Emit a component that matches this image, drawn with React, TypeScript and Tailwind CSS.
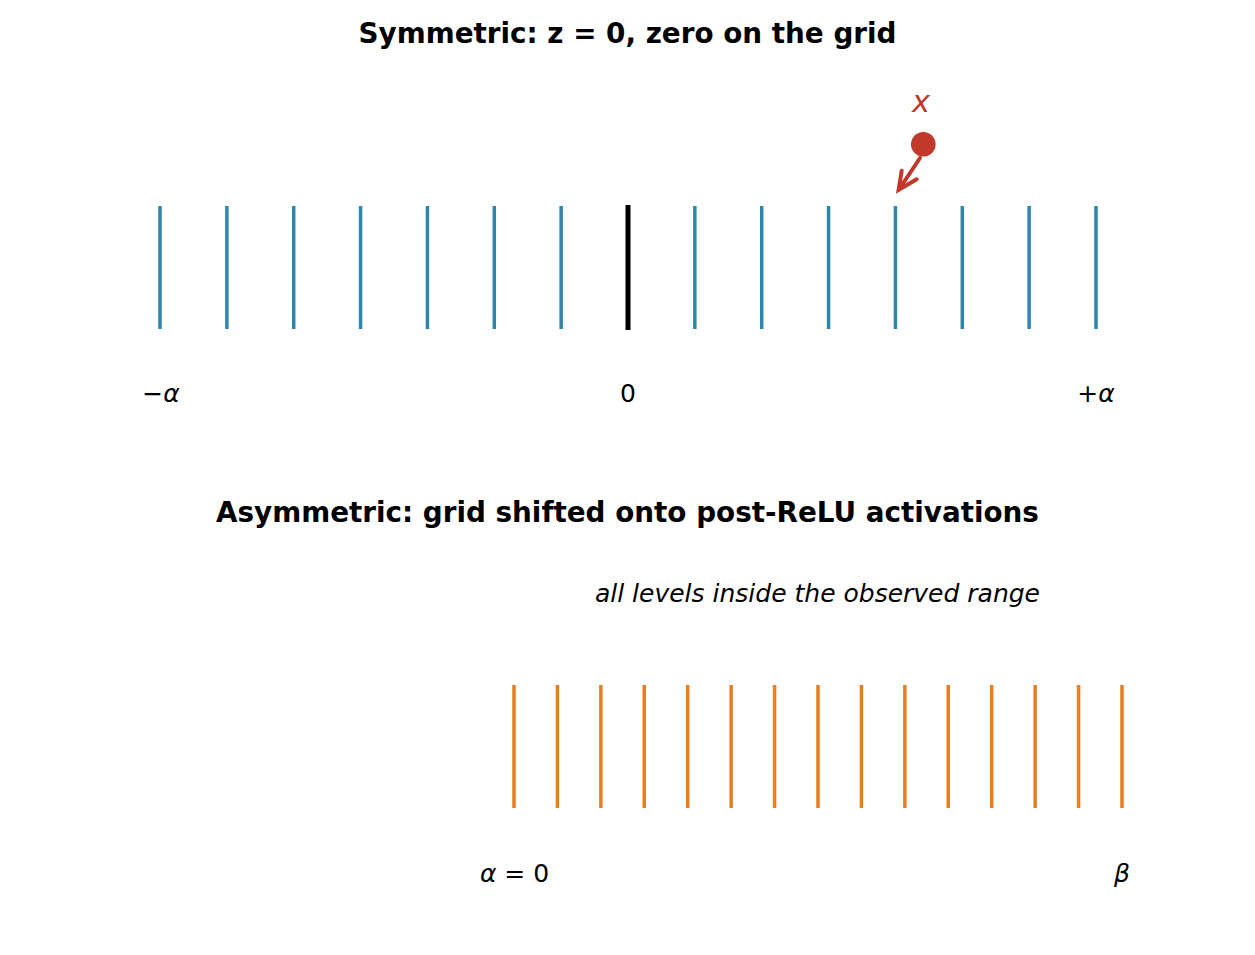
const FONT = '"DejaVu Sans", "Liberation Sans", sans-serif';

const BLUE = '#2e86ab';
const ORANGE = '#e67e22';
const RED = '#c0392b';

// symmetric grid: 15 levels from -alpha to +alpha
const symLevels = Array.from({ length: 15 }, (_, i) => 160 + (i * 936) / 14);
// asymmetric grid: 15 levels from alpha=0 to beta
const asymLevels = Array.from({ length: 15 }, (_, i) => 514 + (i * 608) / 14);

function SymmetricPanel() {
  // svg starts at page y = 66
  return (
    <div className="flex flex-col">
      <div className="h-[66px] pt-[2px] flex items-center justify-center">
        <h2 className="text-[27.8px] font-bold text-black leading-none" style={{ fontFamily: FONT }}>
          Symmetric: z = 0, zero on the grid
        </h2>
      </div>
      <svg width={1255} height={412} viewBox="0 66 1255 412" className="block">
        {symLevels.map((x, i) =>
          i === 7 ? (
            <line key={i} x1={x} x2={x} y1={205} y2={330} stroke="#000" strokeWidth={5} />
          ) : (
            <line key={i} x1={x} x2={x} y1={206} y2={329} stroke={BLUE} strokeWidth={3.5} />
          )
        )}

        {/* the value x and where it rounds to */}
        <text x={921} y={111.5} textAnchor="middle" fill={RED} fontSize={30.5} fontStyle="italic" fontFamily={FONT}>
          x
        </text>
        <circle cx={923.3} cy={144.2} r={12.3} fill={RED} />
        <line x1={920} y1={158} x2={899} y2={189.5} stroke={RED} strokeWidth={4} strokeLinecap="round" />
        <polyline
          points="901.7,170.7 898.6,189.8 916.7,179.3"
          fill="none"
          stroke={RED}
          strokeWidth={4}
          strokeLinecap="round"
          strokeLinejoin="miter"
        />

        <g fontFamily={FONT} fontSize={25} fill="#000" textAnchor="middle">
          <text x={161} y={402}>
            −<tspan fontStyle="italic">α</tspan>
          </text>
          <text x={628} y={402}>0</text>
          <text x={1096} y={402}>
            +<tspan fontStyle="italic">α</tspan>
          </text>
        </g>
      </svg>
    </div>
  );
}

function AsymmetricPanel() {
  // svg starts at page y = 546
  return (
    <div className="flex flex-col">
      <div className="h-[68px] pt-[2px] flex items-center justify-center">
        <h2 className="text-[27.8px] font-bold text-black leading-none" style={{ fontFamily: FONT }}>
          Asymmetric: grid shifted onto post-ReLU activations
        </h2>
      </div>
      <svg width={1255} height={409} viewBox="0 546 1255 409" className="block">
        <text x={1040} y={601.5} textAnchor="end" fontSize={25} fontStyle="italic" fontFamily={FONT} fill="#000">
          all levels inside the observed range
        </text>

        {asymLevels.map((x, i) => (
          <line key={i} x1={x} x2={x} y1={685} y2={808} stroke={ORANGE} strokeWidth={3.5} />
        ))}

        <g fontFamily={FONT} fontSize={25} fill="#000" textAnchor="middle">
          <text x={514.5} y={881.5}>
            <tspan fontStyle="italic">α</tspan> = 0
          </text>
          <text x={1122} y={881.5} fontStyle="italic">
            β
          </text>
        </g>
      </svg>
    </div>
  );
}

export default function App() {
  return (
    <div className="w-[1255px] h-[955px] bg-white overflow-hidden flex flex-col">
      <SymmetricPanel />
      <AsymmetricPanel />
    </div>
  );
}
